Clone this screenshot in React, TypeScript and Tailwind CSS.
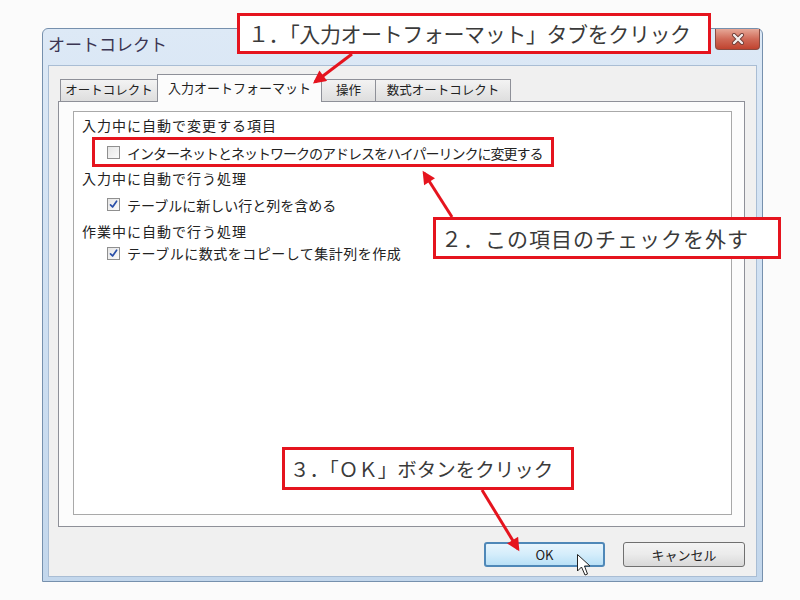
import React from "react";

function Check({ checked }: { checked: boolean }) {
  return (
    <div className="w-[13px] h-[13px] border border-[#8f8f8f] bg-gradient-to-br from-[#e6e6e6] to-[#fafafa] flex items-center justify-center shrink-0">
      {checked && (
        <svg width="9" height="9" viewBox="0 0 9 9">
          <path d="M1.5 4.8 L3.6 7 L7.6 1.2" stroke="#2a4fa8" strokeWidth="1.7" fill="none" strokeLinecap="round" strokeLinejoin="round" />
        </svg>
      )}
    </div>
  );
}

export default function App() {
  return (
    <div className="relative w-[800px] h-[600px] bg-[#fbfbfb] pt-[28px] pl-[42px] overflow-hidden font-['Noto_Sans_CJK_JP','Noto_Sans',sans-serif] text-[#222]">
      {/* Window */}
      <div className="w-[721px] h-[554px] flex flex-col rounded-t-[6px] border border-[#7690ad] bg-gradient-to-b from-[#dde9f6] via-[#cfe0f2] to-[#c3d7ec]">
        <div className="flex justify-between items-start h-[36px] pl-[5px] pr-[2px]">
          <span className="mt-[3px] leading-[24px] text-[17px] text-[#3b3552]">オートコレクト</span>
          <div className="w-[45px] h-[21px] rounded-b-[4px] border border-t-0 border-[#8a4a40] bg-gradient-to-b from-[#e6a898] via-[#d06a58] to-[#c0432f] flex items-center justify-center">
            <svg width="14" height="12" viewBox="0 0 14 12">
              <path d="M3 2 L11 10 M11 2 L3 10" stroke="#6b3a33" strokeWidth="4" strokeLinecap="round" />
              <path d="M3 2 L11 10 M11 2 L3 10" stroke="#f4eeee" strokeWidth="2.4" strokeLinecap="round" />
            </svg>
          </div>
        </div>
        {/* Client */}
        <div className="mx-[5px] h-[512px] bg-[#f0f0f0] border border-[#a9bdd4] pt-[8px] pl-[9px] pr-[11px]">
          {/* Tab strip */}
          <div className="flex items-end h-[28px] -mb-px pl-[2px] relative z-10 text-[12.5px]">
            <div className="w-[98px] h-[23px] border border-[#8e9098] bg-gradient-to-b from-[#f3f3f3] to-[#dedede] flex items-center justify-center leading-none">オートコレクト</div>
            <div className="w-[165px] h-[28px] -ml-px border border-b-0 border-[#8e9098] bg-[#fcfcfc] flex items-center justify-center text-[13px] leading-none pb-[2px]">入力オートフォーマット</div>
            <div className="w-[55px] h-[23px] -ml-px border border-[#8e9098] bg-gradient-to-b from-[#f3f3f3] to-[#dedede] flex items-center justify-center leading-none">操作</div>
            <div className="w-[136px] h-[23px] -ml-px border border-[#8e9098] bg-gradient-to-b from-[#f3f3f3] to-[#dedede] flex items-center justify-center leading-none">数式オートコレクト</div>
          </div>
          {/* Tab panel */}
          <div className="w-[687px] h-[426px] border border-[#8e9098] bg-[#fcfcfc] pt-[9px] pl-[14px]">
            <div className="w-[659px] h-[404px] border border-[#a9a9a9] bg-white text-[14px] leading-none">
              <div className="h-[25px] flex items-center pl-[8px] tracking-[1px]">入力中に自動で変更する項目</div>
              <div className="h-[31px] flex items-center pl-[33px] gap-[7px]">
                <Check checked={false} />
                <span className="tracking-[-1px]">インターネットとネットワークのアドレスをハイパーリンクに変更する</span>
              </div>
              <div className="h-[20px] flex items-center pl-[8px] tracking-[1px]">入力中に自動で行う処理</div>
              <div className="h-[33px] flex items-center pl-[33px] gap-[7px]">
                <Check checked={true} />
                <span>テーブルに新しい行と列を含める</span>
              </div>
              <div className="h-[19px] flex items-center pl-[8px] tracking-[1px]">作業中に自動で行う処理</div>
              <div className="h-[26px] flex items-center pl-[33px] gap-[7px]">
                <Check checked={true} />
                <span className="tracking-[0.5px]">テーブルに数式をコピーして集計列を作成</span>
              </div>
            </div>
          </div>
          {/* Buttons */}
          <div className="flex justify-end gap-[18px] mt-[15px] pr-[0px] text-[13px]">
            <div className="w-[121px] h-[25px] rounded-[3px] border-2 border-[#4f88b8] bg-gradient-to-b from-[#e8f5fd] via-[#d4edfb] to-[#b9e0f6] flex items-center justify-center leading-none">OK</div>
            <div className="w-[122px] h-[25px] rounded-[3px] border border-[#707070] bg-gradient-to-b from-[#f4f4f4] via-[#ebebeb] to-[#d8d8d8] flex items-center justify-center leading-none">キャンセル</div>
          </div>
        </div>
      </div>

      {/* Highlight around the item */}
      <div className="absolute z-20 left-[92px] top-[137px] w-[462px] h-[30px] border-[3px] border-[#e5141e]" />

      {/* Callouts */}
      <div className="absolute z-20 left-[237px] top-[13px] w-[474px] h-[41px] border-[3px] border-[#e5141e] bg-white flex items-center pl-[8px] text-[21px] tracking-[-0.4px] leading-none text-[#3a3a3a]">
        １．「入力オートフォーマット」タブをクリック
      </div>
      <div className="absolute z-20 left-[433px] top-[217px] w-[348px] h-[42px] border-[3px] border-[#e5141e] bg-white flex items-center pl-[5px] text-[21px] tracking-[1px] leading-none text-[#3a3a3a]">
        ２．この項目のチェックを外す
      </div>
      <div className="absolute z-20 left-[282px] top-[447px] w-[292px] h-[43px] border-[3px] border-[#e5141e] bg-white flex items-center pl-[5px] text-[19.5px] leading-none text-[#3a3a3a]">
        ３．「ＯＫ」ボタンをクリック
      </div>

      {/* Arrows and cursor */}
      <svg className="absolute z-30 left-0 top-0 pointer-events-none" width="800" height="600" viewBox="0 0 800 600">
        <defs>
          <marker id="ah" viewBox="0 0 10 10" refX="8" refY="5" markerWidth="15" markerHeight="13" markerUnits="userSpaceOnUse" orient="auto">
            <path d="M0,0 L10,5 L0,10 z" fill="#e5141e" />
          </marker>
        </defs>
        <line x1="352" y1="54" x2="315" y2="82" stroke="#e5141e" strokeWidth="3" markerEnd="url(#ah)" />
        <line x1="452" y1="217" x2="424" y2="173" stroke="#e5141e" strokeWidth="3" markerEnd="url(#ah)" />
        <line x1="482" y1="490" x2="518" y2="549" stroke="#e5141e" strokeWidth="3" markerEnd="url(#ah)" />
        <path d="M577.5 554.5 L577.5 571 L581.5 567 L585 575 L587.5 574 L584.5 566 L590 566 Z" fill="#ffffff" stroke="#222" strokeWidth="1" strokeLinejoin="round" />
      </svg>
    </div>
  );
}
